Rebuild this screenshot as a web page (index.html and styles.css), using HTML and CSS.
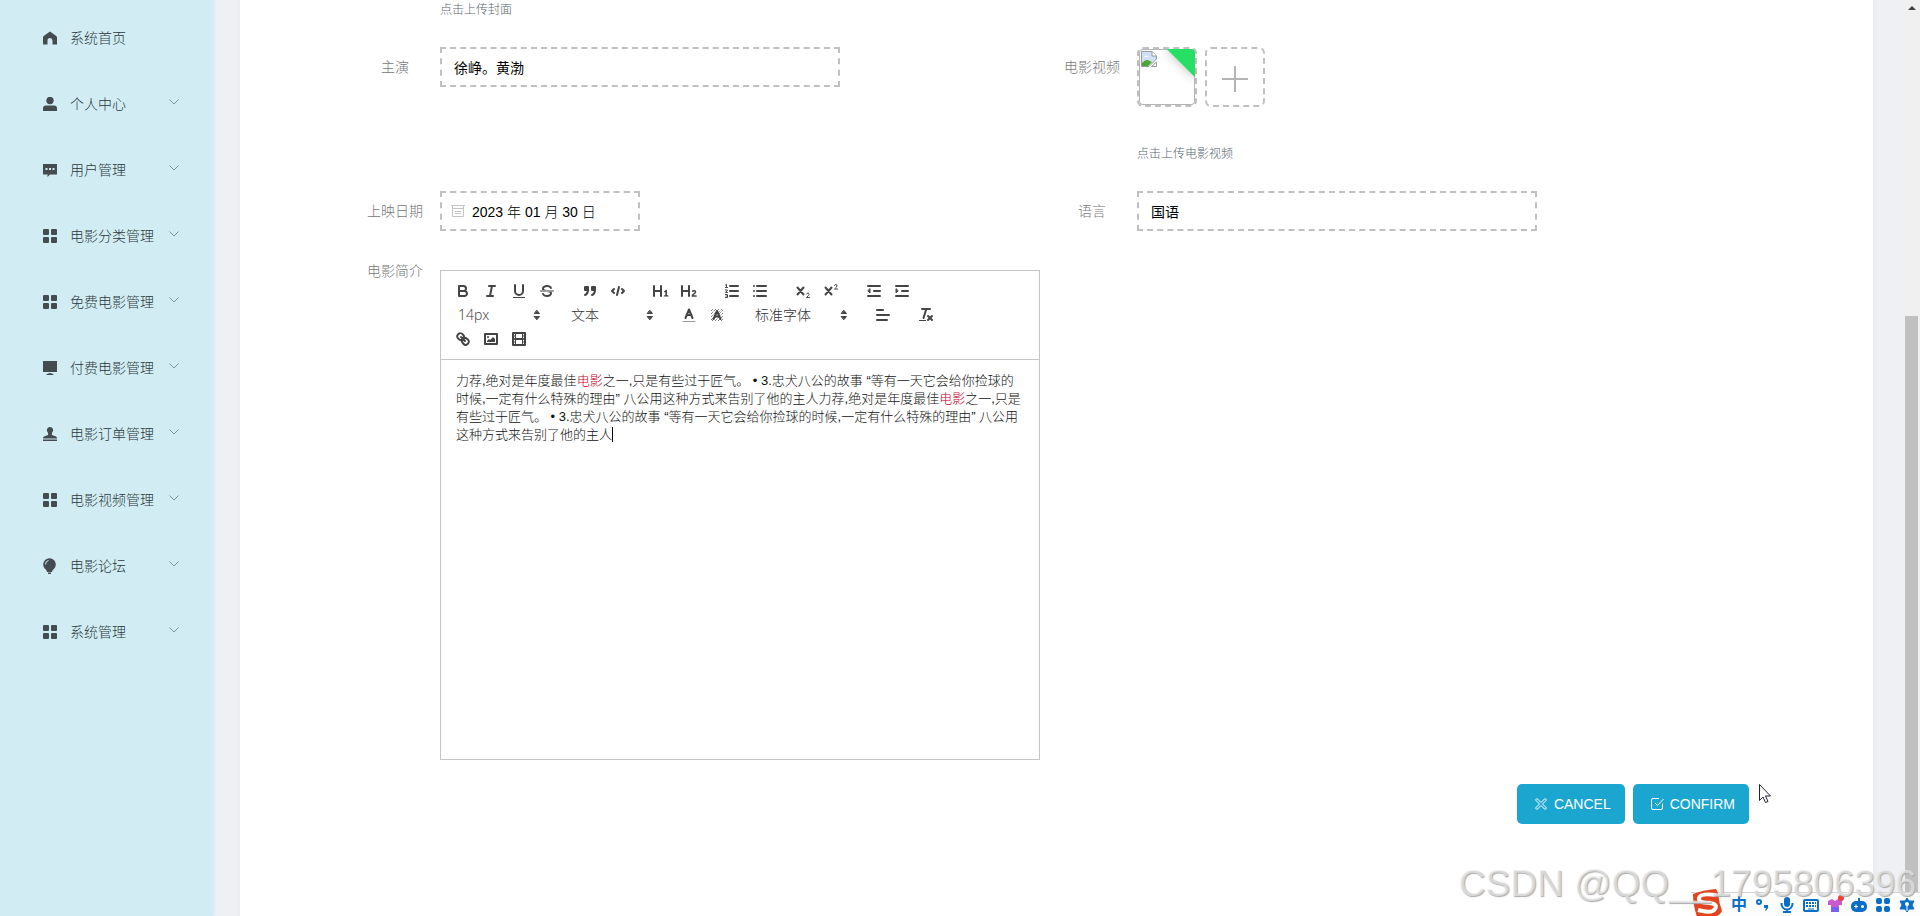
FILE: index.html
```html
<!DOCTYPE html>
<html lang="zh-CN">
<head>
  <meta charset="UTF-8" />
  <meta name="viewport" content="width=device-width, initial-scale=1.0"/>
  <title>电影管理</title>
  <link rel="stylesheet" href="styles.css">
</head>
<body>

  <!-- shared icons -->
  <svg class="sprite" aria-hidden="true">
    <symbol id="i-grid" viewBox="0 0 14 14"><rect width="6" height="6" rx="1"/><rect x="8" width="6" height="6" rx="1"/><rect y="8" width="6" height="6" rx="1"/><rect x="8" y="8" width="6" height="6" rx="1"/></symbol>
    <symbol id="i-down" viewBox="0 0 12 12"><path d="M1.500 3.500L6 8l4.500-4.500" fill="none" stroke="currentColor"/></symbol>
    <symbol id="i-updown" viewBox="0 0 18 18"><path d="M9 4.500L11.500 7.500H6.500zM9 13.500L11.500 10.500H6.500z" fill="currentColor" stroke="currentColor" stroke-width="1" stroke-linejoin="round"/></symbol>
  </svg>

  <nav class="sidebar">
    <a class="menu-item" href="#">
      <svg class="menu-icon" viewBox="0 0 14 14"><path d="M7 .5L13.300 5Q14 5.600 14 6.500V13.500H9.500V9.500a2.500 2.500 0 0 0-5 0V13.500H0V6.500Q0 5.600.7 5z"/></svg>
      <span>系统首页</span>
    </a>
    <a class="menu-item" href="#">
      <svg class="menu-icon" viewBox="0 0 14 14"><circle cx="7" cy="3.500" r="3.700"/><path d="M0 14v-2.500Q0 8.500 3 8.500H11Q14 8.500 14 11.500V14z"/></svg>
      <span>个人中心</span>
      <svg class="arrow"><use href="#i-down"/></svg>
    </a>
    <a class="menu-item" href="#">
      <svg class="menu-icon" viewBox="0 0 14 14"><path fill-rule="evenodd" d="M0 1H14V11.500H7L4.500 14V11.500H0zM2.500 5V7H4.500V5zM6 5V7H8V5zM9.500 5V7H11.500V5z"/></svg>
      <span>用户管理</span>
      <svg class="arrow"><use href="#i-down"/></svg>
    </a>
    <a class="menu-item" href="#">
      <svg class="menu-icon"><use href="#i-grid"/></svg>
      <span>电影分类管理</span>
      <svg class="arrow"><use href="#i-down"/></svg>
    </a>
    <a class="menu-item" href="#">
      <svg class="menu-icon"><use href="#i-grid"/></svg>
      <span>免费电影管理</span>
      <svg class="arrow"><use href="#i-down"/></svg>
    </a>
    <a class="menu-item" href="#">
      <svg class="menu-icon" viewBox="0 0 14 14"><path d="M0 0H14V11H0zM7 12Q10 12.500 11 14H3Q4 12.500 7 12z"/></svg>
      <span>付费电影管理</span>
      <svg class="arrow"><use href="#i-down"/></svg>
    </a>
    <a class="menu-item" href="#">
      <svg class="menu-icon" viewBox="0 0 14 14"><path d="M7 0A3.200 3.200 0 0 1 9.200 5.500Q8.500 7 9 8L13 9.500Q14 10 14 11.500H0Q0 10 1 9.500L5 8Q5.500 7 4.800 5.500A3.200 3.200 0 0 1 7 0zM0 12.500H14V14H0z"/></svg>
      <span>电影订单管理</span>
      <svg class="arrow"><use href="#i-down"/></svg>
    </a>
    <a class="menu-item" href="#">
      <svg class="menu-icon"><use href="#i-grid"/></svg>
      <span>电影视频管理</span>
      <svg class="arrow"><use href="#i-down"/></svg>
    </a>
    <a class="menu-item" href="#">
      <svg class="menu-icon bulb" viewBox="0 0 14 16"><circle cx="6.500" cy="6.500" r="6.300"/><path d="M3 11H10L9 14H4zM5 14.500H8V16H5z"/><path d="M2.500 6.500Q2.500 3 5.500 2.500" fill="none" stroke="#d1edf3"/></svg>
      <span>电影论坛</span>
      <svg class="arrow"><use href="#i-down"/></svg>
    </a>
    <a class="menu-item" href="#">
      <svg class="menu-icon"><use href="#i-grid"/></svg>
      <span>系统管理</span>
      <svg class="arrow"><use href="#i-down"/></svg>
    </a>
  </nav>

  <main class="content">
    <form class="movie-form">
      <p class="tip cover-tip">点击上传封面</p>

      <div class="form-item">
        <label for="actor">主演</label>
        <input class="text-input" type="text" id="actor" value="徐峥。黄渤">
      </div>
      <div class="form-item">
        <label for="video">电影视频</label>
        <div>
          <div class="upload-list">
            <div class="upload-thumb">
              <svg class="broken" viewBox="0 0 16 16"><path d="M.5.5H11L15.500 5V8L8 15.500H.5z" fill="#cfe0f7" stroke="#999"/><path d="M1 15V12Q5 7 9 10L11 11 7 15z" fill="#4ea336"/><path d="M3 6Q5 3 8 6z" fill="#fff"/><path d="M11 .5V5H15.500" fill="#fff" stroke="#999"/><path d="M10.500 15.500H15.500V11z" fill="#fff" stroke="#999"/></svg>
              <span class="ribbon"></span>
            </div>
            <button type="button" class="upload-add" id="video" aria-label="上传">
              <svg viewBox="0 0 28 28"><path d="M14 1V27M1 14H27" stroke="#b4b4b4" stroke-width="2"/></svg>
            </button>
          </div>
          <p class="tip">点击上传电影视频</p>
        </div>
      </div>

      <div class="form-item">
        <label for="date">上映日期</label>
        <div class="date-box">
          <svg viewBox="0 0 14 14" fill="none" stroke="#c4c4c4"><path d="M1.500 1.500H12.500V12.500H1.500zM0 1.500H14M1.500 4.500H12.500M4 7.500H10M4 9.500H10"/></svg>
          <input type="text" id="date" value="2023 年 01 月 30 日">
        </div>
      </div>
      <div class="form-item">
        <label for="lang">语言</label>
        <input class="text-input" type="text" id="lang" value="国语">
      </div>

      <div class="form-item intro">
        <label id="intro-label">电影简介</label>
        <div class="editor">
          <div class="toolbar">
            <span class="group">
              <button type="button" aria-label="bold"><svg viewBox="0 0 18 18"><path d="M5,4H9.500A2.500,2.500,0,0,1,12,6.500v0A2.500,2.500,0,0,1,9.500,9H5zM5,9h5.500A2.500,2.500,0,0,1,13,11.500v0A2.500,2.500,0,0,1,10.500,14H5z"/></svg></button>
              <button type="button" aria-label="italic"><svg viewBox="0 0 18 18"><path d="M7 4H13M5 14H11M8 14L10 4"/></svg></button>
              <button type="button" aria-label="underline"><svg viewBox="0 0 18 18"><path d="M5,3V9a4.012,4.012,0,0,0,4,4H9a4.012,4.012,0,0,0,4-4V3"/><rect class="solid" height="1" width="12" x="3" y="15"/></svg></button>
              <button type="button" aria-label="strike"><svg viewBox="0 0 18 18"><path class="thin" d="M15.500 9H2.500"/><path class="solid" d="M9.007,8C6.542,7.791,6,7.519,6,6.500,6,5.792,7.283,5,9,5c1.571,0,2.765.679,2.969,1.309a1,1,0,0,0,1.900-.617C13.356,4.106,11.354,3,9,3,6.200,3,4,4.538,4,6.500a3.200,3.200,0,0,0,.5,1.843zM8.984,10C11.457,10.208,12,10.479,12,11.500c0,.708-1.283,1.500-3,1.500-1.571,0-2.765-.679-2.969-1.309a1,1,0,1,0-1.900.617C4.644,13.894,6.646,15,9,15c2.800,0,5-1.538,5-3.500a3.200,3.200,0,0,0-.5-1.843z"/></svg></button>
            </span>
            <span class="group">
              <button type="button" aria-label="quote"><svg viewBox="0 0 18 18"><rect class="fill" height="3" width="3" x="4" y="5"/><rect class="fill" height="3" width="3" x="11" y="5"/><path class="fill" d="M7,8c0,4.031-3,5-3,5M14,8c0,4.031-3,5-3,5"/></svg></button>
              <button type="button" aria-label="code"><svg viewBox="0 0 18 18"><path d="M5 7L3 9 5 11M13 7L15 9 13 11M10 5L8 13"/></svg></button>
            </span>
            <span class="group">
              <button type="button" aria-label="heading 1"><svg viewBox="0 0 18 18"><path class="solid" d="M10,4V14a1,1,0,0,1-2,0V10H3v4a1,1,0,0,1-2,0V4A1,1,0,0,1,3,4V8H8V4a1,1,0,0,1,2,0Zm6.068,9.209H14.981V8.244a.392.392,0,0,0-.430-.424h-.500a.600.600,0,0,0-.440.190l-1.530,1.420a.391.391,0,0,0,0,.600l.280.300a.374.374,0,0,0,.570.020l.440-.400v3.259H12.300a.400.400,0,0,0-.430.430v.530a.400.400,0,0,0,.430.430h3.770a.400.400,0,0,0,.430-.430v-.530a.400.400,0,0,0-.432-.430Z"/></svg></button>
              <button type="button" aria-label="heading 2"><svg viewBox="0 0 18 18"><path class="solid" d="M16.740,13.810v.530a.5.5,0,0,1-.5.5H12.100a.5.5,0,0,1-.5-.5v-.260c0-2.400,3.100-2.720,3.100-4a.700.700,0,0,0-.780-.700 1.100,1.100,0,0,0-.860.500.400.400,0,0,1-.6.080l-.500-.300a.400.400,0,0,1-.1-.6A2.500,2.500,0,0,1,14.100,8a2,2,0,0,1,2.200,2c0,2-2.700,2.400-2.800,3.300h2.740a.5.5,0,0,1,.5.510ZM9,3A.990.990,0,0,0,8,4V8H3V4A1,1,0,0,0,1,4V14a1,1,0,0,0,2,0V10H8v4a1,1,0,0,0,2,0V4A1,1,0,0,0,9,3Z"/></svg></button>
            </span>
            <span class="group">
              <button type="button" aria-label="ordered list"><svg viewBox="0 0 18 18"><path d="M7 4H15M7 9H15M7 14H15"/><path class="thin" d="M2.500 5.500H4.500M3.500 5.500V2.500L2.500 3M2.500 8H4.500L2.500 10.500H4.500M2.500 12.500H4.500V15.500H2.500M3 14H4.500"/></svg></button>
              <button type="button" aria-label="bullet list"><svg viewBox="0 0 18 18"><path d="M6 4H15M6 9H15M6 14H15M3 4V4M3 9V9M3 14V14"/></svg></button>
            </span>
            <span class="group">
              <button type="button" aria-label="subscript"><svg viewBox="0 0 18 18"><path d="M3.500 5.500L9.500 12.500M9.500 5.500L3.500 12.500"/><path class="thin" d="M12.500 12Q13 11 14 11T15 12.500Q15 13.300 12.500 15.500H15.500"/></svg></button>
              <button type="button" aria-label="superscript"><svg viewBox="0 0 18 18"><path d="M3.500 5.500L9.500 12.500M9.500 5.500L3.500 12.500"/><path class="thin" d="M12.500 3.500Q13 2.500 14 2.500T15 4Q15 4.800 12.500 7H15.500"/></svg></button>
            </span>
            <span class="group">
              <button type="button" aria-label="outdent"><svg viewBox="0 0 18 18"><path d="M3 14H15M3 4H15M9 9H15"/><path class="fill thin" d="M5 7V11L3 9z"/></svg></button>
              <button type="button" aria-label="indent"><svg viewBox="0 0 18 18"><path d="M3 14H15M3 4H15M9 9H15"/><path class="fill thin" d="M3 7V11L5 9z"/></svg></button>
            </span>
            <span class="group picker">
              <select aria-label="字号"><option>14px</option></select>
              <svg><use href="#i-updown"/></svg>
            </span>
            <span class="group picker">
              <select aria-label="标题"><option>文本</option></select>
              <svg><use href="#i-updown"/></svg>
            </span>
            <span class="group">
              <button type="button" aria-label="color"><svg viewBox="0 0 18 18"><path class="thin faded" d="M3 15.500H15"/><path d="M5.500 12L9 3.500 12.500 12M6.500 9H11.500"/></svg></button>
              <button type="button" aria-label="background"><svg viewBox="0 0 18 18"><path class="hatch" d="M3 5L5 3M3 8L8 3M3 11L11 3M3 14L14 3M4 15L15 4M7 15L15 7M10 15L15 10M13 15L15 13"/><path d="M5.500 13L9 5 12.500 13M6.500 10.500H11.500"/></svg></button>
            </span>
            <span class="group picker wide">
              <select aria-label="字体"><option>标准字体</option></select>
              <svg><use href="#i-updown"/></svg>
            </span>
            <span class="group">
              <button type="button" aria-label="align"><svg viewBox="0 0 18 18"><path d="M3 9H15M3 14H13M3 4H9"/></svg></button>
            </span>
            <span class="group">
              <button type="button" aria-label="clean"><svg viewBox="0 0 18 18"><path d="M5 3H13M9.300 3L6.500 12M11 10L15 14M15 10L11 14"/><rect class="solid" height="1" width="7" x="2" y="14"/></svg></button>
            </span>
            <span class="group">
              <button type="button" aria-label="link"><svg viewBox="0 0 18 18"><path d="M7 7L11 11M8.900,4.577a3.476,3.476,0,0,1,.360,4.679A3.476,3.476,0,0,1,4.577,8.900C3.185,7.500,2.035,6.400,4.217,4.217S7.500,3.185,8.900,4.577ZM13.423,9.100a3.476,3.476,0,0,0-4.679-.360,3.476,3.476,0,0,0,.360,4.679c1.392,1.392,2.500,2.542,4.679.360S14.815,10.500,13.423,9.100Z"/></svg></button>
              <button type="button" aria-label="image"><svg viewBox="0 0 18 18"><rect height="10" width="12" x="3" y="4"/><circle class="solid" cx="6" cy="7" r="1"/><path class="solid" d="M5 12V11L7 9 8 10 11 7 13 9V12z"/></svg></button>
              <button type="button" aria-label="video"><svg viewBox="0 0 18 18"><rect height="12" width="12" x="3" y="3"/><path class="thin" d="M5.500 3V15M12.500 3V15M3 6H5M3 9H5M3 12H5M13 6H15M13 9H15M13 12H15"/><path d="M5 9H13"/></svg></button>
            </span>
          </div>
          <div class="editor-body" contenteditable="true" role="textbox" aria-labelledby="intro-label">力荐,绝对是年度最佳<em>电影</em>之一,只是有些过于匠气。 • 3.忠犬八公的故事 “等有一天它会给你捡球的时候,一定有什么特殊的理由” 八公用这种方式来告别了他的主人力荐,绝对是年度最佳<em>电影</em>之一,只是有些过于匠气。 • 3.忠犬八公的故事 “等有一天它会给你捡球的时候,一定有什么特殊的理由” 八公用这种方式来告别了他的主人<span class="caret"></span></div>
        </div>
      </div>

      <div class="actions">
        <button type="button" class="btn">
          <svg viewBox="0 0 14 14"><path d="M3 1.500L7 5.500 11 1.500 12.500 3 8.500 7 12.500 11 11 12.500 7 8.500 3 12.500 1.500 11 5.500 7 1.500 3z"/></svg>CANCEL
        </button>
        <button type="submit" class="btn">
          <svg viewBox="0 0 14 14"><path d="M9 1.500H3Q1.500 1.500 1.500 3V11Q1.500 12.500 3 12.500H11Q12.500 12.500 12.500 11V6.500M5 6L7.500 8.500 13.500 2"/></svg>CONFIRM
        </button>
      </div>
    </form>
  </main>

  <div class="scrollbar">
    <svg viewBox="0 0 16 16"><path d="M8 6L12 10H4z" fill="#404040"/></svg>
    <div class="thumb"></div>
  </div>

  <!-- mouse pointer -->
  <svg class="cursor" viewBox="0 0 13 20"><path d="M.5.500V16.500L4 13 6.500 18.500 9 17.500 6.500 12H11.500z" fill="#fff" stroke="#223"/></svg>

  <!-- input method bar -->
  <div class="ime">
    <svg class="sogou" viewBox="0 0 32 28"><path d="M2 5Q12 1 25 0L27 4Q28 14 31 22Q29 27 22 28H6Q2 16 2 5z" fill="#e2441f"/><path d="M25 6Q9 4 8 9T19 14Q27 15 24 20T7 21" fill="none" stroke="#fff" stroke-width="4"/></svg>
    <span class="zh">中</span>
    <svg viewBox="0 0 16 16"><circle cx="4" cy="5" r="2" fill="none" stroke="#0b6fc7" stroke-width="2"/><path d="M9 8H13Q14 12 10 14L11 11H9z"/></svg>
    <svg viewBox="0 0 16 16"><rect x="5" width="6" height="10" rx="3"/><path d="M2.500 6V7A5.500 5.500 0 0 0 13.500 7V6M8 12V15M4 15H12" fill="none" stroke="#0b6fc7" stroke-width="2"/></svg>
    <svg viewBox="0 0 16 16"><rect x="1" y="3" width="14" height="11" rx="1" fill="none" stroke="#0b6fc7" stroke-width="2"/><path d="M3 6H13M3 9H13" stroke="#0b6fc7" stroke-width="2" stroke-dasharray="2 1"/><path d="M5 12H11" stroke="#0b6fc7"/></svg>
    <svg class="skin" viewBox="0 0 16 16"><path d="M1 4L5 2 8 4 11 2 15 4V8H12V15H4V8H1z" fill="#c85ad0"/><path d="M4 10H12V15H4z" fill="#7562f5"/><circle cx="14" cy="1" r="3" fill="#f23d2e"/></svg>
    <svg viewBox="0 0 16 16"><rect y="4" width="16" height="11" rx="5"/><path d="M8 1V5" stroke="#0b6fc7" stroke-width="2"/><path d="M3 9.500H7M5 7.500V11.500" stroke="#fff"/><circle cx="11.500" cy="9.500" r="1.500" fill="#fff"/></svg>
    <svg viewBox="0 0 16 16"><rect x="1" y="1" width="6" height="6" rx="2"/><rect x="9" y="1" width="6" height="6" rx="2"/><rect x="1" y="9" width="6" height="6" rx="2"/><rect x="9" y="9" width="6" height="6" rx="2"/></svg>
    <svg viewBox="0 0 16 16"><path d="M8 1L10 4 15 4 13 8 15 12H10L8 15 6 12H1L3 8 1 4H6z" stroke="#0b6fc7" stroke-linejoin="round"/><circle cx="8" cy="7" r="2" fill="#fff"/><path d="M8 8V14" stroke="#fff"/></svg>
  </div>
  <div class="watermark">CSDN @QQ__1795806396</div>

</body>
</html>
```
FILE: styles.css
```css
* {
  box-sizing: border-box;
  margin: 0;
  padding: 0;
}

body {
  height: 100vh;
  display: flex;
  position: relative;
  overflow: hidden;
  background: #eef0f3;
  font-family: "Liberation Sans", "Noto Sans CJK SC", sans-serif;
  font-size: 14px;
  font-weight: 300;
}

input, button, select {
  font: inherit;
}

.sprite {
  display: none;
}

/* sidebar */
.sidebar {
  flex: 0 0 213px;
  padding: 5px 0;
  background: #d1edf3;
  box-shadow: 0 0 4px #d3dcee;
}

.menu-item {
  display: flex;
  align-items: center;
  height: 66px;
  padding: 0 33px 0 43px;
  color: #2c363a;
  text-decoration: none;
}

.menu-item span {
  padding-bottom: 2px;
}

.menu-icon {
  width: 14px;
  height: 14px;
  margin-right: 13px;
  fill: #444c50;
}

.menu-icon.bulb {
  height: 16px;
}

.arrow {
  width: 12px;
  height: 12px;
  margin: 0 0 4px auto;
  color: #7b969d;
}

/* main area */
.content {
  flex: 1;
  margin: 0 31px 0 27px;
  padding: 0 129px 0 110px;
  background: #fff;
  box-shadow: 0 0 4px #e2e5e9;
}

.movie-form {
  display: grid;
  grid-template-columns: 1fr 1fr;
  align-items: start;
}

.tip {
  font-size: 12px;
  line-height: 18px;
  color: #5a6770;
}

.cover-tip {
  grid-column: 1 / 3;
  padding: 1px 0 0 90px;
  margin-bottom: 28px;
}

.form-item {
  display: flex;
  align-items: flex-start;
}

.form-item label {
  flex: 0 0 90px;
  line-height: 40px;
  text-align: center;
  color: #777;
}

.text-input {
  width: 400px;
  height: 40px;
  padding: 0 12px;
  border: 2px dashed #c0c0c0;
  background: #fff;
  color: #000;
  font-weight: 400;
}

.upload-list {
  display: flex;
  gap: 8px;
  margin-bottom: 38px;
}

.upload-list + .tip {
  margin-bottom: 28px;
}

.upload-thumb, .upload-add {
  width: 60px;
  height: 60px;
  border: 2px dashed #c0c0c0;
  border-radius: 6px;
  background: #fff;
}

.upload-thumb {
  position: relative;
  overflow: hidden;
  box-shadow: inset 0 0 0 1px #b5b5b5;
}

.upload-thumb .broken {
  width: 16px;
  height: 16px;
  margin: 2px;
}

.ribbon {
  position: absolute;
  top: -20px;
  right: -20px;
  width: 40px;
  height: 40px;
  background: #25e065;
  box-shadow: 0 0 12px #bbb;
  transform: rotate(45deg);
}

.upload-add svg {
  width: 28px;
  height: 28px;
  margin-top: 6px;
}

.date-box {
  display: flex;
  align-items: center;
  width: 200px;
  height: 40px;
  padding: 0 9px;
  border: 2px dashed #c0c0c0;
}

.date-box svg {
  width: 14px;
  height: 14px;
  margin-right: 7px;
}

.date-box input {
  flex: 1;
  min-width: 0;
  border: 0;
  color: #000;
}

/* rich text editor */
.intro {
  grid-column: 1 / 3;
  margin-top: 39px;
}

.intro label {
  line-height: 2px;
}

.editor {
  width: 600px;
  border: 1px solid #c6c6c6;
}

.toolbar {
  display: flex;
  flex-wrap: wrap;
  padding: 8px;
  border-bottom: 1px solid #c6c6c6;
}

.group {
  display: flex;
  height: 24px;
  margin-right: 15px;
}

.group button {
  width: 28px;
  height: 24px;
  padding: 3px 5px;
  border: 0;
  background: none;
}

.group svg {
  display: block;
  width: 18px;
  height: 18px;
  fill: none;
  stroke: #444;
  stroke-width: 2;
  stroke-linecap: round;
  stroke-linejoin: round;
}

.group .thin {
  stroke-width: 1;
}

.group .solid {
  fill: #444;
  stroke: none;
}

.group .fill {
  fill: #444;
}

.group .faded {
  stroke: #999;
}

.group .hatch {
  stroke-width: 1;
  stroke-linecap: butt;
  stroke-dasharray: 1 1;
}

.picker {
  position: relative;
  width: 98px;
}

.picker.wide {
  width: 108px;
}

.picker select {
  width: 100%;
  padding: 0 0 2px 9px;
  border: 0;
  background: none;
  appearance: none;
  color: #333;
  font-family: "Open Sans", "Noto Sans CJK SC", sans-serif;
}

.picker svg {
  position: absolute;
  top: 3px;
  right: 1px;
  color: #444;
  pointer-events: none;
}

.editor-body {
  height: 399px;
  padding: 12px 15px;
  font-size: 13px;
  line-height: 18px;
  color: #111;
  outline: none;
}

.editor-body em {
  font-style: normal;
  color: #c8001c;
}

.caret {
  border-left: 1px solid #000;
}

.actions {
  grid-column: 1 / 3;
  display: flex;
  justify-content: flex-end;
  gap: 8px;
  margin: 24px -5px 0 0;
}

.btn {
  display: flex;
  align-items: center;
  height: 40px;
  padding: 0 14px 0 17px;
  border: 0;
  border-radius: 5px;
  background: #1ba6d0;
  color: #fff;
  font-weight: 400;
}

.btn svg {
  width: 14px;
  height: 14px;
  margin-right: 6px;
  fill: none;
  stroke: #fff;
}

/* page scrollbar */
.scrollbar {
  display: flex;
  flex-direction: column;
  flex: 0 0 16px;
  background: #f0f0f0;
}

.scrollbar svg {
  height: 16px;
}

.thumb {
  flex: 1;
  margin: 300px 2px 0 1px;
  background: #c0c0c0;
}

.cursor {
  position: absolute;
  right: 148px;
  bottom: 112px;
  width: 13px;
  height: 20px;
}

.ime {
  position: absolute;
  right: 0;
  bottom: 0;
  display: flex;
  align-items: center;
  gap: 8px;
  height: 24px;
  padding-right: 5px;
  border-top: 1px solid #d4d4d8;
  background: #fdfdfe;
  color: #0b6fc7;
}

.ime svg {
  width: 16px;
  height: 16px;
  fill: #0b6fc7;
  overflow: visible;
}

.ime .sogou {
  width: 32px;
  height: 28px;
  margin-top: -4px;
}

.ime .zh {
  width: 16px;
  font-size: 16px;
  line-height: 20px;
  font-weight: 700;
}

.watermark {
  position: absolute;
  right: 4px;
  bottom: 12px;
  font-size: 37px;
  line-height: 40px;
  color: rgba(235, 235, 235, 0.7);
  text-shadow: 1px 1px 1px #aaa;
}
```
